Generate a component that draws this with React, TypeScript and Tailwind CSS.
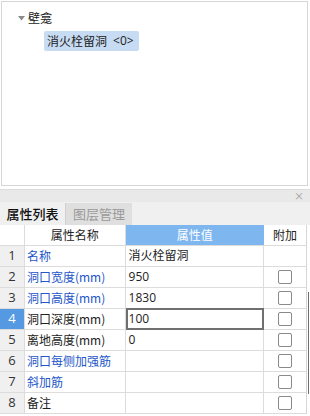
import React from "react";

const rows = [
  { n: "1", name: "名称", blue: true, value: "消火栓留洞", check: false },
  { n: "2", name: "洞口宽度(mm)", blue: true, value: "950", check: true },
  { n: "3", name: "洞口高度(mm)", blue: true, value: "1830", check: true },
  { n: "4", name: "洞口深度(mm)", blue: false, value: "100", check: true, active: true },
  { n: "5", name: "离地高度(mm)", blue: false, value: "0", check: true },
  { n: "6", name: "洞口每侧加强筋", blue: true, value: "", check: true },
  { n: "7", name: "斜加筋", blue: true, value: "", check: true },
  { n: "8", name: "备注", blue: false, value: "", check: true },
];

export default function App() {
  return (
    <div
      className="w-[310px] h-[416px] bg-white overflow-hidden text-[12px] text-[#222]"
      style={{ fontFamily: '"Noto Sans CJK SC", "Noto Sans", sans-serif' }}
    >
      {/* tree panel */}
      <div className="ml-[1px] mt-[1px] w-[307px] h-[185px] border border-[#d6d6d6] bg-white">
        <div className="flex items-center h-[20px] mt-[6px] pl-[16px]">
          <svg width="7" height="5" viewBox="0 0 7 5" className="mr-[3px]">
            <path d="M0 0 L7 0 L3.5 4.5 Z" fill="#8a8a8a" />
          </svg>
          <span className="leading-none">壁龛</span>
        </div>
        <div className="ml-[42px] mt-[3px] inline-flex items-center h-[20px] pl-[3px] pr-[5px] bg-[#c7dcf2] rounded-[2px]">
          <span className="leading-none">消火栓留洞</span>
          <span
            className="leading-none ml-[6px] text-[12px]"
            style={{ fontFamily: '"Open Sans", sans-serif' }}
          >
            &lt;0&gt;
          </span>
        </div>
      </div>

      {/* property panel */}
      <div className="mt-[3px] w-[310px]">
        <div className="h-[13px] bg-[#e9e9e9] border-t border-[#dcdcdc] flex items-center justify-end pr-[6px]">
          <span className="text-[10px] text-[#999] leading-none">×</span>
        </div>
        <div className="h-[23px] bg-[#f0f0f0] flex items-end">
          <div className="w-[65px] h-[23px] flex items-center justify-center bg-[#f0f0f0] text-[13px] text-[#111] font-medium">
            属性列表
          </div>
          <div className="w-[67px] h-[22px] flex items-center justify-center bg-[#dfdfdf] text-[13px] text-[#9a9a9a] border-l border-[#d0d0d0]">
            图层管理
          </div>
        </div>
        <div className="flex">
          <div className="w-[307px] border-r border-[#d6d6d6]">
            {/* header */}
            <div className="flex h-[21px] border-b border-[#dcdcdc]">
              <div className="w-[25px] border-r border-[#dcdcdc] bg-white" />
              <div className="w-[101px] border-r border-[#dcdcdc] flex items-center justify-center">属性名称</div>
              <div className="w-[139px] bg-[#7eb6ef] text-white flex items-center justify-center">属性值</div>
              <div className="w-[42px] flex items-center justify-center">附加</div>
            </div>
            {rows.map((r) => (
              <div key={r.n} className="flex h-[21px] border-b border-[#dcdcdc]">
                <div
                  className={
                    r.active
                      ? "w-[25px] border-r border-[#dcdcdc] bg-[#5599e3] text-white flex items-center justify-center text-[13px]"
                      : "w-[25px] border-r border-[#dcdcdc] bg-[#f0f0f0] text-[#333] flex items-center justify-center text-[13px]"
                  }
                  style={{ fontFamily: '"Open Sans", sans-serif' }}
                >
                  {r.n}
                </div>
                <div
                  className={
                    r.blue
                      ? "w-[101px] border-r border-[#dcdcdc] flex items-center pl-[2px] text-[#2356c9]"
                      : "w-[101px] border-r border-[#dcdcdc] flex items-center pl-[2px] text-[#222]"
                  }
                >
                  {r.name}
                </div>
                <div
                  className={
                    r.active
                      ? "w-[139px] border-2 border-[#707070] flex items-center pl-[1px] -mt-[1px] h-[22px]"
                      : "w-[139px] border-r border-[#dcdcdc] flex items-center pl-[3px]"
                  }
                  style={{ fontFamily: '"Open Sans", "Noto Sans CJK SC", sans-serif' }}
                >
                  {r.value}
                </div>
                <div className="w-[42px] flex items-center justify-center">
                  {r.check && (
                    <div className="w-[14px] h-[14px] border border-[#8a8a8a] rounded-[2px] bg-white" />
                  )}
                </div>
              </div>
            ))}
          </div>
          <div className="w-[3px] relative">
            <div className="absolute left-[1px] top-[67px] w-[1px] h-[102px] bg-[#707070]" />
          </div>
        </div>
      </div>
    </div>
  );
}
